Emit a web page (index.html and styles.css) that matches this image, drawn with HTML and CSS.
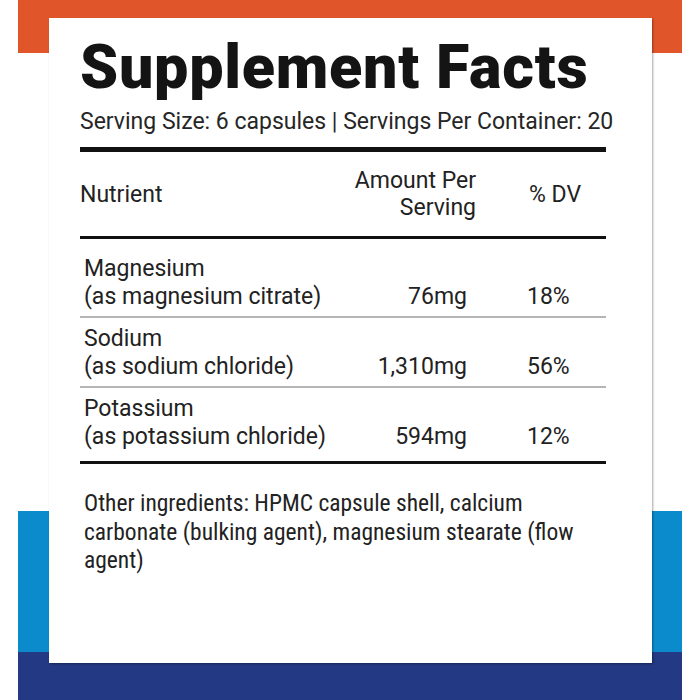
FILE: index.html
```html
<!DOCTYPE html>
<html>
<head>
<meta charset="utf-8">
<link rel="stylesheet" href="styles.css">
</head>
<body>
<div class="frame">
  <div class="card">
    <h1 class="title">Supplement Facts</h1>
    <p class="serving">Serving Size: 6 capsules | Servings Per Container: 20</p>
    <div class="rule thick"></div>
    <div class="row head">
      <div class="name">Nutrient</div>
      <div class="amt">Amount Per<br>Serving</div>
      <div class="dv">% DV</div>
    </div>
    <div class="rule mid"></div>
    <div class="row item first">
      <div class="name">Magnesium<br>(as magnesium citrate)</div>
      <div class="amt">76mg</div>
      <div class="dv">18%</div>
    </div>
    <div class="rule thin"></div>
    <div class="row item">
      <div class="name">Sodium<br>(as sodium chloride)</div>
      <div class="amt">1,310mg</div>
      <div class="dv">56%</div>
    </div>
    <div class="rule thin"></div>
    <div class="row item last">
      <div class="name">Potassium<br>(as potassium chloride)</div>
      <div class="amt">594mg</div>
      <div class="dv">12%</div>
    </div>
    <div class="rule mid"></div>
    <p class="other">Other ingredients: HPMC capsule shell, calcium carbonate (bulking agent), magnesium stearate (flow agent)</p>
  </div>
</div>
</body>
</html>
```

FILE: styles.css
```css
* { box-sizing: border-box; }
html, body { margin: 0; padding: 0; background: #fff; }
body {
  width: 700px;
  height: 700px;
  overflow: hidden;
  font-family: Roboto, "Liberation Sans", sans-serif;
  color: #222;
}
.frame {
  margin: 0 18px;
  height: 700px;
  padding-top: 18px;
  padding-left: 31px;
  background: linear-gradient(to bottom,
    #e0562a 0, #e0562a 53px,
    #ffffff 53px, #ffffff 511px,
    #0b8bcb 511px, #0b8bcb 652px,
    #233983 652px, #233983 700px);
}
.card {
  width: 603px;
  height: 645px;
  background: #fff;
  box-shadow: 1px 1px 2px rgba(0,0,0,0.35);
  padding: 19px 46px 0 31px;
}
.title {
  margin: 0;
  font-size: 61px;
  line-height: 61px;
  font-weight: 900;
  color: #141414;
  letter-spacing: 0.75px;
  white-space: nowrap;
}
.serving {
  margin: 11px 0 0;
  font-size: 23px;
  line-height: 26px;
  white-space: nowrap;
  color: #262626;
}
.rule { background: #111; }
.rule.thick { height: 5px; margin-top: 12px; }
.rule.mid { height: 3px; }
.rule.thin { height: 2px; background: #b5b5b5; }
.row {
  display: grid;
  grid-template-columns: 267px 120px 139px;
  font-size: 23px;
  line-height: 28px;
  color: #222;
}
.row .amt { text-align: right; white-space: nowrap; }
.row .dv { white-space: nowrap; padding-left: 60px; }
.head { align-items: center; padding: 15px 0 15px; line-height: 27px; }
.head .amt { margin-right: -9px; }
.head .dv { padding-left: 62px; }
.item { align-items: end; padding: 7px 0 5px; }
.item .name { padding-left: 4px; white-space: nowrap; }
.item.first { padding-top: 16px; }
.item.last { padding-bottom: 10px; }
.other {
  margin: 0;
  width: 522px;
  padding: 25px 0 0 4px;
  font-family: "Liberation Sans Narrow", "Roboto Condensed", Roboto, sans-serif;
  font-size: 23.5px;
  line-height: 28.5px;
  color: #222;
}
```
